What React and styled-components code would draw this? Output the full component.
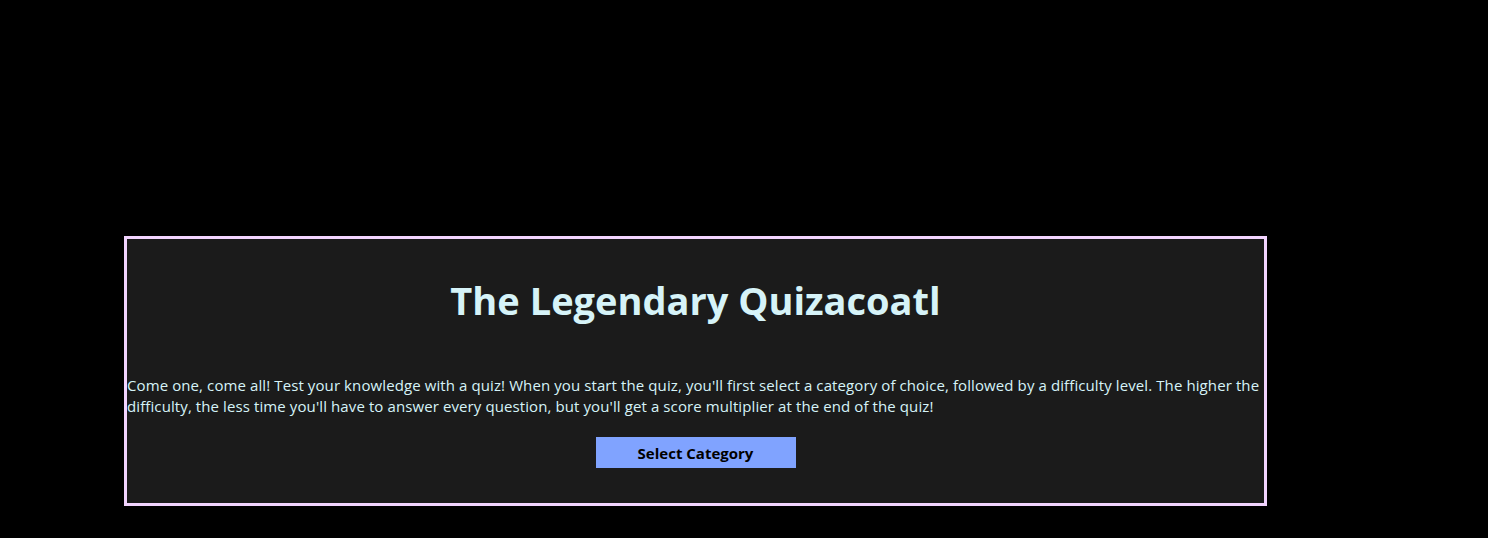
import React from "react";
import styled, { createGlobalStyle } from "styled-components";

const Global = createGlobalStyle`
  html, body { background: #000; }
  body { margin: 0; font-family: "Open Sans", "Noto Sans", sans-serif; }
`;

const Page = styled.main`
  padding: 236px 0 0 124px;
  min-height: 538px;
  box-sizing: border-box;
`;

const Card = styled.section`
  width: 1143px;
  height: 270px;
  box-sizing: border-box;
  border: 3px solid #f2d4ff;
  background: #1b1b1b;
  display: flex;
  flex-direction: column;
  align-items: center;
  color: #d6f3f8;
`;

const Title = styled.h1`
  margin: 35px 0 0;
  font-size: 38px;
  line-height: 52px;
  font-weight: 700;
  color: #d6f3f8;
`;

const Intro = styled.p`
  margin: 49px 0 0;
  width: 100%;
  font-size: 15px;
  letter-spacing: 0.1px;
  line-height: 21px;
  text-align: left;
`;

const Button = styled.button`
  margin-top: 20px;
  width: 200px;
  height: 31px;
  border: none;
  background: #80a3ff;
  color: #000;
  font-family: inherit;
  font-size: 15px;
  font-weight: 700;
  cursor: pointer;
`;

export default function App() {
  return (
    <>
      <Global />
      <Page>
        <Card>
          <Title>The Legendary Quizacoatl</Title>
          <Intro>
            Come one, come all! Test your knowledge with a quiz! When you start the quiz, you'll first select a category of choice, followed by a difficulty level. The higher the difficulty, the less time you'll have to answer every question, but you'll get a score multiplier at the end of the quiz!
          </Intro>
          <Button>Select Category</Button>
        </Card>
      </Page>
    </>
  );
}
